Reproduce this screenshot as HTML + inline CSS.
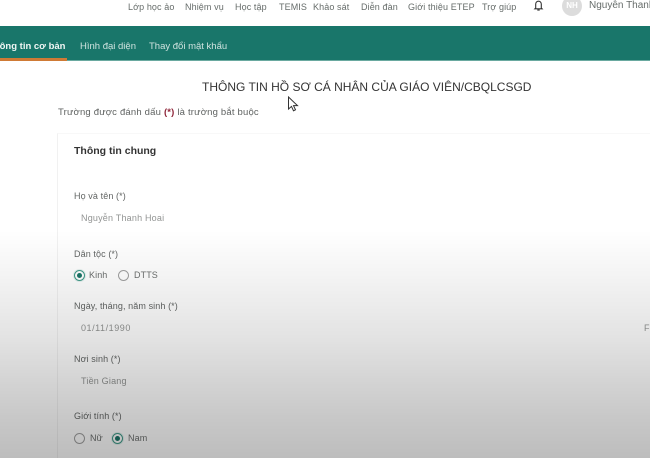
<!DOCTYPE html>
<html lang="vi">
<head>
<meta charset="utf-8">
<style>
html,body{margin:0;padding:0}
body{width:650px;height:458px;overflow:hidden;position:relative;background:#fff;font-family:"Liberation Sans",sans-serif;color:#555}
#w{position:absolute;left:0;top:0;width:650px;height:458px;overflow:hidden;filter:blur(.35px)}
.t{position:absolute;white-space:nowrap;line-height:14px;font-size:9px}
.nav{color:#666c6a;top:1px;font-size:9px;line-height:13px;letter-spacing:.1px}
.lbl{color:#626564;font-size:9px;letter-spacing:.1px}
.val{color:#929493;font-size:9px;letter-spacing:.2px}
.r{position:absolute;width:9px;height:9px;border:1px solid #a0a0a0;border-radius:50%;box-sizing:content-box}
.r.on{border-color:#3f9a88;background:#fff;box-shadow:0 0 0 1px rgba(31,133,113,.12)}
.r.on:after{content:"";position:absolute;left:2px;top:2px;width:5px;height:5px;border-radius:50%;background:#1b7568}
.grad{position:absolute;left:0;top:0;width:650px;height:458px;background:linear-gradient(to bottom,rgba(0,0,0,0) 0,rgba(0,0,0,0) 230px,rgba(0,0,0,.03) 262px,rgba(0,0,0,.07) 300px,rgba(0,0,0,.115) 340px,rgba(0,0,0,.17) 380px,rgba(0,0,0,.22) 420px,rgba(0,0,0,.26) 458px);pointer-events:none}
</style>
</head>
<body>
<div id="w">
<div class="t nav" style="left:128px">Lớp học ảo</div>
<div class="t nav" style="left:185px">Nhiệm vụ</div>
<div class="t nav" style="left:235px">Học tập</div>
<div class="t nav" style="left:279px">TEMIS</div>
<div class="t nav" style="left:313px">Khảo sát</div>
<div class="t nav" style="left:361px">Diễn đàn</div>
<div class="t nav" style="left:408px;letter-spacing:.12px">Giới thiệu ETEP</div>
<div class="t nav" style="left:482px">Trợ giúp</div>
<svg style="position:absolute;left:532px;top:-1px" width="13" height="13" viewBox="0 0 13 13"><path d="M3.7 9V5a2.8 2.8 0 0 1 5.6 0v4l.8.8H2.9z" fill="none" stroke="#333" stroke-width="1.1"/><path d="M5.3 11h2.4" stroke="#333" stroke-width="1.2"/></svg>
<div style="position:absolute;left:562px;top:-4px;width:20px;height:20px;border-radius:50%;background:#dcdcdc;color:#fff;font-size:8px;font-weight:bold;line-height:20px;text-align:center">NH</div>
<div class="t" style="left:589px;top:-1px;font-size:10px;color:#666c6a">Nguyễn Thanh Hoai</div>

<div style="position:absolute;left:0;top:26px;width:650px;height:35px;background:#19766a;border-bottom:1px solid #6aa9a0;box-sizing:border-box"></div>
<div style="position:absolute;left:0;top:58px;width:67px;height:3px;background:#cf7a35"></div>
<div class="t" style="left:-12px;top:40px;color:#f0f6f4;font-weight:bold;font-size:9.5px">Thông tin cơ bản</div>
<div class="t" style="left:80px;top:40px;color:#cfe3df;font-size:9.5px">Hình đại diện</div>
<div class="t" style="left:149px;top:40px;color:#cfe3df;font-size:9.5px">Thay đổi mật khẩu</div>

<div class="t" style="left:202px;top:80px;font-size:12px;color:#333;letter-spacing:0">THÔNG TIN HỒ SƠ CÁ NHÂN CỦA GIÁO VIÊN/CBQLCSGD</div>
<svg style="position:absolute;left:287px;top:96px" width="12" height="17" viewBox="0 0 12 17"><path d="M1.5 1v12l3-2.6 2 4.4 2-1-2-4.2h4z" fill="#fff" stroke="#333" stroke-width="1"/></svg>
<div class="t" style="left:58px;top:106px;font-size:9.5px;color:#5f6261;letter-spacing:.19px">Trường được đánh dấu <b style="color:#8e2438">(*)</b> là trường bắt buộc</div>

<div style="position:absolute;left:57px;top:133px;width:600px;height:330px;border-left:1px solid #f1f1f1;border-top:1px solid #f8f8f8;box-sizing:border-box"></div>
<div class="t" style="left:74px;top:144px;font-size:10.5px;font-weight:bold;color:#333">Thông tin chung</div>

<div class="t lbl" style="left:74px;top:189px">Họ và tên (*)</div>
<div class="t val" style="left:81px;top:211px">Nguyễn Thanh Hoai</div>

<div class="t lbl" style="left:74px;top:247px">Dân tộc (*)</div>
<div class="r on" style="left:74px;top:270px"></div>
<div class="t lbl" style="left:89px;top:268px;color:#6b6e6d">Kinh</div>
<div class="r" style="left:118px;top:270px"></div>
<div class="t lbl" style="left:134px;top:268px;color:#6b6e6d">DTTS</div>

<div class="t lbl" style="left:74px;top:299px">Ngày, tháng, năm sinh (*)</div>
<div class="t val" style="left:81px;top:321px;letter-spacing:.55px">01/11/1990</div>
<div class="t val" style="left:644px;top:321px">Fri</div>

<div class="t lbl" style="left:74px;top:352px">Nơi sinh (*)</div>
<div class="t val" style="left:81px;top:374px">Tiền Giang</div>

<div class="t lbl" style="left:74px;top:409px">Giới tính (*)</div>
<div class="r" style="left:74px;top:433px"></div>
<div class="t lbl" style="left:90px;top:431px;color:#6b6e6d">Nữ</div>
<div class="r on" style="left:112px;top:433px"></div>
<div class="t lbl" style="left:128px;top:431px;color:#6b6e6d">Nam</div>

<div class="grad"></div>
</div>
</body>
</html>
